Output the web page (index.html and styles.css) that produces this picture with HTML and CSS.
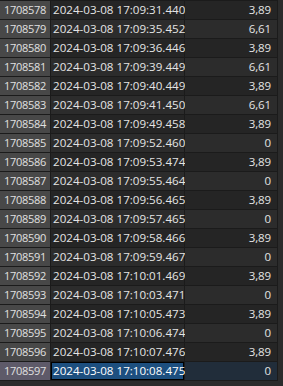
FILE: index.html
```html
<!DOCTYPE html>
<html>
<head>
<meta charset="utf-8">
<link rel="stylesheet" href="styles.css">
</head>
<body>
<div class="grid">
  <div class="row"><div class="hdr">1708578</div><div class="c date">2024-03-08 17:09:31.440</div><div class="c val">3,89</div></div>
  <div class="row alt"><div class="hdr">1708579</div><div class="c date">2024-03-08 17:09:35.452</div><div class="c val">6,61</div></div>
  <div class="row"><div class="hdr">1708580</div><div class="c date">2024-03-08 17:09:36.446</div><div class="c val">3,89</div></div>
  <div class="row alt"><div class="hdr">1708581</div><div class="c date">2024-03-08 17:09:39.449</div><div class="c val">6,61</div></div>
  <div class="row"><div class="hdr">1708582</div><div class="c date">2024-03-08 17:09:40.449</div><div class="c val">3,89</div></div>
  <div class="row alt"><div class="hdr">1708583</div><div class="c date">2024-03-08 17:09:41.450</div><div class="c val">6,61</div></div>
  <div class="row"><div class="hdr">1708584</div><div class="c date">2024-03-08 17:09:49.458</div><div class="c val">3,89</div></div>
  <div class="row alt"><div class="hdr">1708585</div><div class="c date">2024-03-08 17:09:52.460</div><div class="c val">0</div></div>
  <div class="row"><div class="hdr">1708586</div><div class="c date">2024-03-08 17:09:53.474</div><div class="c val">3,89</div></div>
  <div class="row alt"><div class="hdr">1708587</div><div class="c date">2024-03-08 17:09:55.464</div><div class="c val">0</div></div>
  <div class="row"><div class="hdr">1708588</div><div class="c date">2024-03-08 17:09:56.465</div><div class="c val">3,89</div></div>
  <div class="row alt"><div class="hdr">1708589</div><div class="c date">2024-03-08 17:09:57.465</div><div class="c val">0</div></div>
  <div class="row"><div class="hdr">1708590</div><div class="c date">2024-03-08 17:09:58.466</div><div class="c val">3,89</div></div>
  <div class="row alt"><div class="hdr">1708591</div><div class="c date">2024-03-08 17:09:59.467</div><div class="c val">0</div></div>
  <div class="row"><div class="hdr">1708592</div><div class="c date">2024-03-08 17:10:01.469</div><div class="c val">3,89</div></div>
  <div class="row alt"><div class="hdr">1708593</div><div class="c date">2024-03-08 17:10:03.471</div><div class="c val">0</div></div>
  <div class="row"><div class="hdr">1708594</div><div class="c date">2024-03-08 17:10:05.473</div><div class="c val">3,89</div></div>
  <div class="row alt"><div class="hdr">1708595</div><div class="c date">2024-03-08 17:10:06.474</div><div class="c val">0</div></div>
  <div class="row"><div class="hdr">1708596</div><div class="c date">2024-03-08 17:10:07.476</div><div class="c val">3,89</div></div>
  <div class="row alt sel"><div class="hdr">1708597</div><div class="c date">2024-03-08 17:10:08.475</div><div class="c val">0</div></div>
</div>
</body>
</html>
```

FILE: styles.css
```css
html, body {
  margin: 0;
  padding: 0;
  background: #2b2b2b;
  width: 283px;
  height: 386px;
  overflow: hidden;
}
.grid {
  display: flex;
  flex-direction: column;
  gap: 1px;
  background: #1b1b1b;
  width: 278px;
  padding-top: 1px;
  padding-bottom: 1px;
  font-family: "Open Sans", "Noto Sans", sans-serif;
  color: #e4e4e4;
}
.row {
  display: grid;
  grid-template-columns: 50px 133px 92px;
  column-gap: 1px;
  height: 18px;
  line-height: 18px;
  padding-right: 1px;
}
.hdr {
  background: #484848;
  text-align: right;
  padding-right: 4px;
  font-size: 11px;
  letter-spacing: -0.3px;
  color: #e0e0e0;
}
.c {
  background: #252525;
}
.alt .c {
  background: #2c2c2c;
}
.date {
  padding-left: 2px;
  white-space: nowrap;
  font-size: 11.6px;
}
.val {
  text-align: right;
  padding-right: 6px;
  font-size: 11.5px;
  letter-spacing: -0.1px;
}
.sel .hdr {
  background: #5e5a69;
}
.sel .date {
  background: #1d4f7f;
  box-shadow: inset 0 0 0 1px #000;
  color: #ffffff;
}
.sel .val {
  background: #212d3a;
}
```
